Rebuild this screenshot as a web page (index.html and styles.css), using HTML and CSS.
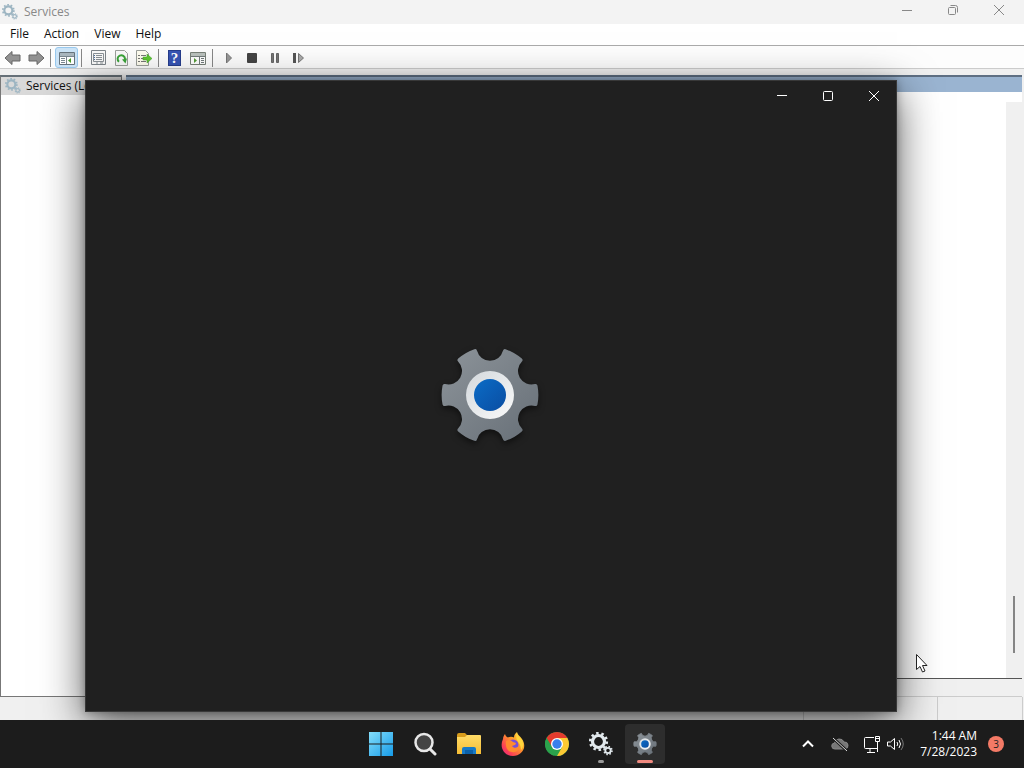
FILE: index.html
```html
<!DOCTYPE html>
<html lang="en">
<head>
<meta charset="utf-8">
<title>Services</title>
<link rel="stylesheet" href="styles.css">
</head>
<body>
<svg class="defs" aria-hidden="true">
  <defs>
    <linearGradient id="steel" x1="0" y1="0" x2="1" y2="1"><stop offset="0" stop-color="#8c9399"/><stop offset="1" stop-color="#687078"/></linearGradient>
    <linearGradient id="ring" x1="0" y1="0" x2="1" y2="1"><stop offset="0" stop-color="#d3d8dc"/><stop offset="1" stop-color="#fafafa"/></linearGradient>
    <linearGradient id="blue" x1="0" y1="0" x2="1" y2="1"><stop offset="0" stop-color="#0b6cc6"/><stop offset="1" stop-color="#0a4da2"/></linearGradient>
    <linearGradient id="win" x1="0" y1="0" x2="1" y2="1"><stop offset="0" stop-color="#84defb"/><stop offset="1" stop-color="#169be8"/></linearGradient>
    <linearGradient id="folder" x1="0" y1="0" x2="0" y2="1"><stop offset="0" stop-color="#ffdc68"/><stop offset="1" stop-color="#f6bd35"/></linearGradient>
    <linearGradient id="fox" x1="1" y1="0" x2="0" y2="1"><stop offset="0" stop-color="#fff04a"/><stop offset=".4" stop-color="#ff9b27"/><stop offset=".75" stop-color="#fc4055"/><stop offset="1" stop-color="#e42286"/></linearGradient>
    <symbol id="gear" viewBox="-50 -50 100 100">
      <path d="M45.500-9A46.400 46.400 0 0 1 45.500 9A15.500 15.500 0 0 0 30.500 34.900A46.400 46.400 0 0 1 15 43.900A15.500 15.500 0 0 0-15 43.900A46.400 46.400 0 0 1-30.500 34.900A15.500 15.500 0 0 0-45.500 9A46.400 46.400 0 0 1-45.500-9A15.500 15.500 0 0 0-30.500-34.900A46.400 46.400 0 0 1-15-43.900A15.500 15.500 0 0 0 15-43.900A46.400 46.400 0 0 1 30.500-34.900A15.500 15.500 0 0 0 45.500-9Z" fill="url(#steel)" stroke="url(#steel)" stroke-width="4" stroke-linejoin="round"/>
      <circle r="24" fill="url(#ring)"/><circle r="16" fill="url(#blue)"/>
    </symbol>
    <symbol id="cogs" viewBox="0 0 24 24">
      <circle cx="9.500" cy="9.500" r="6" fill="none" stroke="currentColor" stroke-width="3.200"/>
      <circle cx="9.500" cy="9.500" r="8.300" fill="none" stroke="currentColor" stroke-width="2.600" stroke-dasharray="2.500 2.715"/>
      <circle cx="19" cy="18.500" r="2.700" fill="none" stroke="currentColor" stroke-width="1.800"/>
      <circle cx="19" cy="18.500" r="4" fill="none" stroke="currentColor" stroke-width="1.600" stroke-dasharray="1.500 1.642"/>
    </symbol>
    <symbol id="arrow" viewBox="0 0 18 16"><path d="M1 8 8 1.500V5h8v6H8v3.500Z" fill="#929292" stroke="#666"/></symbol>
  </defs>
</svg>
<main class="desktop">
  <section class="console" aria-label="Services">
    <header class="titlebar">
      <svg class="icon16 cog-pale"><use href="#cogs"/></svg>
      <h1>Services</h1>
      <div class="caption">
        <button aria-label="Minimize"><svg viewBox="0 0 12 12"><path d="M1 6.500h10"/></svg></button>
        <button aria-label="Restore"><svg viewBox="0 0 12 12"><rect x="1.500" y="3.500" width="7" height="7" rx="1"/><path d="M3.500 1.500h5a2 2 0 0 1 2 2v5"/></svg></button>
        <button aria-label="Close"><svg viewBox="0 0 12 12"><path d="m1 1 10 10M11 1 1 11"/></svg></button>
      </div>
    </header>
    <nav class="menu">
      <button>File</button><button>Action</button><button>View</button><button>Help</button>
    </nav>
    <div class="toolbar" role="toolbar">
      <button aria-label="Back"><svg viewBox="0 0 18 16"><use href="#arrow"/></svg></button>
      <button aria-label="Forward"><svg class="flip" viewBox="0 0 18 16"><use href="#arrow"/></svg></button>
      <span class="sep"></span>
      <button class="on" aria-label="Show console tree"><svg viewBox="0 0 18 16"><path d="M1.500 2.500h15v12h-15z" fill="#fff" stroke="#68747d"/><path d="M2 3h14v3H2z" fill="#a9b6be"/><path d="M2 6.500h14M8.500 6v8M3 8.500h4M3 10.500h4M3 12.500h4" stroke="#7b8790" fill="none"/><path d="M13 8v5l-3-2.500z" fill="#4b9c28"/></svg></button>
      <span class="sep"></span>
      <button aria-label="Properties"><svg viewBox="0 0 18 16"><path d="M2.500.5h14v14h-14z" fill="#fafafa" stroke="#7e858a"/><path d="M4.500 3.500h10v8h-10zM7 5.500h6M7 7.500h6M7 9.500h6M7 13h2m2 0h3" fill="none" stroke="#8a9196"/><path d="M5 5h1v1H5zm0 2h1v1H5zm0 2h1v1H5z" fill="#4b6da0"/></svg></button>
      <button aria-label="Refresh"><svg viewBox="0 0 18 16"><path d="M3.500.5h9l3 3v12h-12z" fill="#fafafa" stroke="#9b9f9b"/><path d="M7 11.800A3.700 3.700 0 1 1 13 9" fill="none" stroke="#3ba43a" stroke-width="2"/><path d="m10 9.500 5-1-1.500 5z" fill="#3ba43a"/></svg></button>
      <button aria-label="Export list"><svg viewBox="0 0 18 16"><path d="M1.500.5h9l3 3v12h-12z" fill="#fffdf0" stroke="#9b9f9b"/><path d="M3 5.500h2m1 0h5M3 8.500h2m1 0h5M3 11.500h2m1 0h5" stroke="#777"/><path d="M8 7h4V4l5 4.500-5 4.500v-3H8z" fill="#61c832" stroke="#3c9c2a" stroke-width=".5"/></svg></button>
      <span class="sep"></span>
      <button class="help" aria-label="Help"><span>?</span></button>
      <button aria-label="Show action pane"><svg viewBox="0 0 18 16"><path d="M1.500 2.500h15v12h-15z" fill="#fff" stroke="#788078"/><path d="M2 3h14v3H2z" fill="#bac1bd"/><path d="M2 6.500h14M10.500 6v8M12 8.500h3M12 10.500h3M12 12.500h3" stroke="#727b7b" fill="none"/><path d="M5 8v5l3-2.500z" fill="#549c38"/></svg></button>
      <span class="sep"></span>
      <button aria-label="Start"><svg viewBox="0 0 18 16"><path d="M6.500 3v10l5-5z" fill="#999" stroke="#777"/></svg></button>
      <button aria-label="Stop"><svg viewBox="0 0 18 16"><rect x="4" y="3" width="10" height="10" rx="1" fill="#444"/></svg></button>
      <button aria-label="Pause"><svg viewBox="0 0 18 16"><path d="M5.500 3.500h2v9h-2zm5 0h2v9h-2z" fill="#777" stroke="#666"/></svg></button>
      <button aria-label="Restart"><svg viewBox="0 0 18 16"><path d="M4 3h3v10H4z" fill="#555"/><path d="M9.500 3.500v9l5-4.500z" fill="#aaa" stroke="#777"/></svg></button>
    </div>
    <div class="panes">
      <aside class="tree"><a href="#services"><svg class="icon16 cog-pale"><use href="#cogs"/></svg>Services (Local)</a></aside>
      <section class="detail" id="services">
        <div class="band"></div>
        <div class="list"><div class="track"><div class="thumb"></div></div></div>
        <div class="tabs"></div>
      </section>
    </div>
    <div class="status"><span></span><span></span><span></span></div>
  </section>

  <section class="settings" aria-label="Settings">
    <div class="caption light">
      <button aria-label="Minimize"><svg viewBox="0 0 12 12"><path d="M1 5.500h10"/></svg></button>
      <button aria-label="Maximize"><svg viewBox="0 0 12 12"><rect x="1.500" y="1.500" width="9" height="9" rx="1"/></svg></button>
      <button aria-label="Close"><svg viewBox="0 0 12 12"><path d="m1 1 10 10M11 1 1 11"/></svg></button>
    </div>
    <svg class="splash" viewBox="-50 -50 100 100"><use href="#gear" x="-50" y="-50" width="100" height="100"/></svg>
  </section>
  <svg class="pointer" viewBox="0 0 14 21"><path d="M1.500 1.500v15l3.500-3 2.500 5.500 2.500-1-2.500-5.500H12z" fill="#fff" stroke="#222" stroke-linejoin="round"/></svg>
</main>

<footer class="taskbar">
  <nav class="apps" aria-label="Taskbar">
    <button aria-label="Start"><svg viewBox="0 0 24 24" fill="url(#win)"><path d="M0 0h11.500v11.500H0zM12.500 0H24v11.500H12.500zM0 12.500h11.500V24H0zM12.500 12.500H24V24H12.500z"/></svg></button>
    <button aria-label="Search"><svg viewBox="0 0 24 24"><circle cx="11" cy="10.500" r="8.500" fill="#444" stroke="#e8e8e8" stroke-width="2.500"/><path d="m17 17 5 5" stroke="#e8e8e8" stroke-width="3" stroke-linecap="round"/></svg></button>
    <button aria-label="File Explorer"><svg viewBox="0 0 24 24"><path d="M0 3a2 2 0 0 1 2-2h6l3 3h12v8H0z" fill="#d89c1c"/><path d="M0 5h8l2-2h13a1 1 0 0 1 1 1v18H0z" fill="url(#folder)"/><path d="M5 22v-5a2 2 0 0 1 2-2h10a2 2 0 0 1 2 2v5z" fill="#177ac7"/><path d="M8 18h8v4H8z" fill="#0b60a9"/></svg></button>
    <button aria-label="Firefox"><svg viewBox="0 0 24 24"><path d="M4 2c.5 2 1.500 3 3 3.500Q10 4 13 5.500C13 3 14 1.500 16 0c.5 3 3 4 5 7C27 16 20 24 12 24 3 24-2 15 2 7c0-2 1-4 2-5Z" fill="url(#fox)"/><circle cx="12" cy="13" r="5.500" fill="#7650d8"/><path d="M5 9c3-2 5-1 7 1l3 1c0 2-2 2-4 3 2 3 6 2 7-1 1 5-3 8-7 7-4 0-7-4-6-11Z" fill="#ff8b2e"/><path d="M16 1c.5 3 3 4 5 7 2 4 1 8-1 10 0-5-2-7-4-10-1-2-1-5 0-7Z" fill="#ffd63c"/></svg></button>
    <button aria-label="Chrome"><svg viewBox="0 0 24 24"><circle cx="12" cy="12" r="12" fill="#2ba24c"/><path d="M12 12 1.610 6A12 12 0 0 1 22.390 6H12Z" fill="#e33b2e"/><path d="M12 6h10.390A12 12 0 0 1 12 24l5.200-9Z" fill="#fcc934"/><path d="M1.610 6 6.800 15 12 12V6Z" fill="#e33b2e"/><path d="M1.610 6 6.800 15l5.200 3-3 5.600A12 12 0 0 1 1.610 6" fill="#2ba24c"/><circle cx="12" cy="12" r="6" fill="#fff"/><circle cx="12" cy="12" r="4.700" fill="#397fec"/></svg></button>
    <button class="running" aria-label="Services"><svg class="cog-bright" viewBox="0 0 24 24"><use href="#cogs"/></svg></button>
    <button class="running active" aria-label="Settings"><svg viewBox="0 0 24 24"><use href="#gear" width="24" height="24"/></svg></button>
  </nav>
  <div class="tray">
    <button aria-label="Show hidden icons"><svg viewBox="0 0 20 20"><path d="m5 12.500 5-5 5 5" stroke-width="2"/></svg></button>
    <button class="cloud" aria-label="OneDrive"><svg viewBox="0 0 20 20"><path d="M5 15a3 3 0 0 1-.5-6A5 5 0 0 1 14 8a3.500 3.500 0 0 1 1 7z" fill="#777" stroke="#888"/><path d="m3 4 14 13" stroke="#1c1c1c" stroke-width="3"/><path d="m3 4 14 13" stroke="#ddd"/></svg></button>
    <button aria-label="Network"><svg viewBox="0 0 20 20"><path d="M12 3.500H3.500a1 1 0 0 0-1 1v9a1 1 0 0 0 1 1h12M8 15v3m-3 .5h8M13.500 2.500h4v5h-4zM15.500 8v10M14 4.500h3"/></svg></button>
    <button aria-label="Volume"><svg viewBox="0 0 20 20"><path d="M2.500 8v4h3l4 3.500v-11L5.500 8zM12 8q1.500 2 0 4M14 6q3 4 0 8"/><path d="M16 4q4.500 6 0 12" stroke="#777"/></svg></button>
    <button class="clock"><time datetime="2023-07-28T01:44">1:44 AM<br>7/28/2023</time></button>
    <button class="badge" aria-label="3 notifications">3</button>
  </div>
</footer>
</body>
</html>
```

FILE: styles.css
```css
* { box-sizing: border-box; }
body {
  margin: 0;
  height: 100vh;
  display: flex;
  flex-direction: column;
  overflow: hidden;
  font: 12px/16px "Open Sans", "Noto Sans", sans-serif;
  color: #111;
}
button { border: 0; padding: 0; background: none; color: inherit; font: inherit; }
svg { display: block; }
.defs { position: absolute; width: 0; height: 0; }
.desktop { flex: 1; min-height: 0; position: relative; overflow: hidden; display: flex; }
.console { flex: 1; display: flex; flex-direction: column; background: #f0f0f0; }
.icon16 { width: 16px; height: 16px; }
.cog-pale { color: #9db5c2; }
.cog-bright { color: #e2e9ed; }

.titlebar { display: flex; height: 24px; padding-left: 2px; gap: 6px; background: #f3f3f3; color: #888; align-items: center; }
.titlebar h1 { margin: 0; font-size: 12px; font-weight: 400; }
.caption { display: flex; margin-left: auto; align-self: flex-start; }
.caption button { width: 46px; height: 20px; display: grid; place-items: center; }
.caption svg { width: 12px; height: 12px; fill: none; stroke: #888; }
.caption.light svg { stroke: #fff; }
.caption.light button { height: 32px; }
.titlebar .caption { padding-right: 2px; }

.menu { display: flex; height: 22px; padding: 0 2px 2px; background: #fff; border-bottom: 1px solid #aaa; }
.menu button { padding: 0 8px; }
.menu button + button { padding-left: 7px; }

.toolbar { display: flex; align-items: center; height: 23px; padding: 1px 0 0 1px; background: #fdfdfd; border-bottom: 1px solid #ccc; }
.toolbar button { width: 23px; height: 21px; display: grid; place-items: center; }
.toolbar svg { width: 18px; height: 16px; }
.toolbar .flip { transform: scaleX(-1); }
.toolbar .on { background: #cce4f7; border: 1px solid #99c9ee; border-radius: 3px; }
.sep { width: 1px; height: 18px; margin: 0 3px; background: #888; }
.toolbar .sep + button { margin-left: 1px; }
.help span { width: 13px; height: 16px; background: #3754b4; border: 1px solid #263d8c; color: #fff; font: 700 15px/14px "Liberation Serif", serif; }

.panes { flex: 1; display: flex; gap: 4px; padding-top: 6px; }
.tree { width: 122px; background: #fff; border: 1px solid #777; border-top: 2px solid #667078; }
.tree a { display: flex; align-items: center; gap: 5px; height: 18px; padding-left: 4px; background: #d9d9d9; color: #111; text-decoration: none; white-space: nowrap; overflow: hidden; }
.detail { flex: 1; display: flex; flex-direction: column; margin-right: 2px; border-top: 2px solid #5e6f83; }
.band { height: 15px; background: #9ab4d1; }
.list { flex: 1; display: flex; justify-content: flex-end; padding-top: 10px; background: #fff; border-bottom: 1px solid #555; }
.track { width: 16px; padding: 0 7px 25px 7px; display: flex; align-items: flex-end; background: #f0f0f0; }
.thumb { width: 2px; height: 57px; background: #858585; }
.tabs { height: 18px; border-bottom: 1px solid #ccc; }
.status { height: 23px; display: flex; justify-content: flex-end; background: #f0f0f0; }
.status span { border-left: 1px solid #ccc; width: 134px; }
.status span:nth-child(2) { width: 85px; }
.status span:nth-child(3) { width: 2px; }

.settings {
  position: absolute;
  inset: 80px 127px 8px 85px;
  display: flex;
  flex-direction: column;
  background: #202020;
  outline: 1px solid #383838;
  outline-offset: -1px;
  box-shadow: 0 12px 40px rgba(0, 0, 0, .65), 0 0 8px rgba(0, 0, 0, .3);
}
.splash { width: 100px; height: 100px; margin: auto; transform: translate(-1px, -17px); filter: drop-shadow(0 3px 3px rgba(0, 0, 0, .5)); }
.pointer { position: absolute; right: 95px; bottom: 46px; width: 14px; height: 21px; }

.taskbar { height: 48px; display: grid; grid-template-columns: 1fr auto 1fr; background: #1c1c1c; color: #fff; }
.apps { grid-column: 2; display: flex; gap: 4px; align-items: center; padding-left: 2px; }
.apps button { position: relative; width: 40px; height: 40px; display: grid; place-items: center; border-radius: 4px; }
.apps svg { width: 24px; height: 24px; }
.apps .active { background: #2d2d2d; }
.running::after { content: ""; position: absolute; bottom: 1px; left: 17px; width: 6px; height: 3px; border-radius: 2px; background: #999; }
.active::after { left: 12px; width: 16px; background: #f18a80; }
.tray { display: flex; align-items: center; justify-content: flex-end; padding-right: 20px; gap: 3px; }
.tray svg { width: 20px; height: 20px; fill: none; stroke: #fff; }
.cloud { margin: 0 9px; }
.clock { margin-left: 12px; text-align: right; font-size: 12px; }
.badge { width: 16px; height: 16px; margin-left: 8px; border-radius: 50%; background: #f47a66; color: #222; font-size: 10px; }
```
